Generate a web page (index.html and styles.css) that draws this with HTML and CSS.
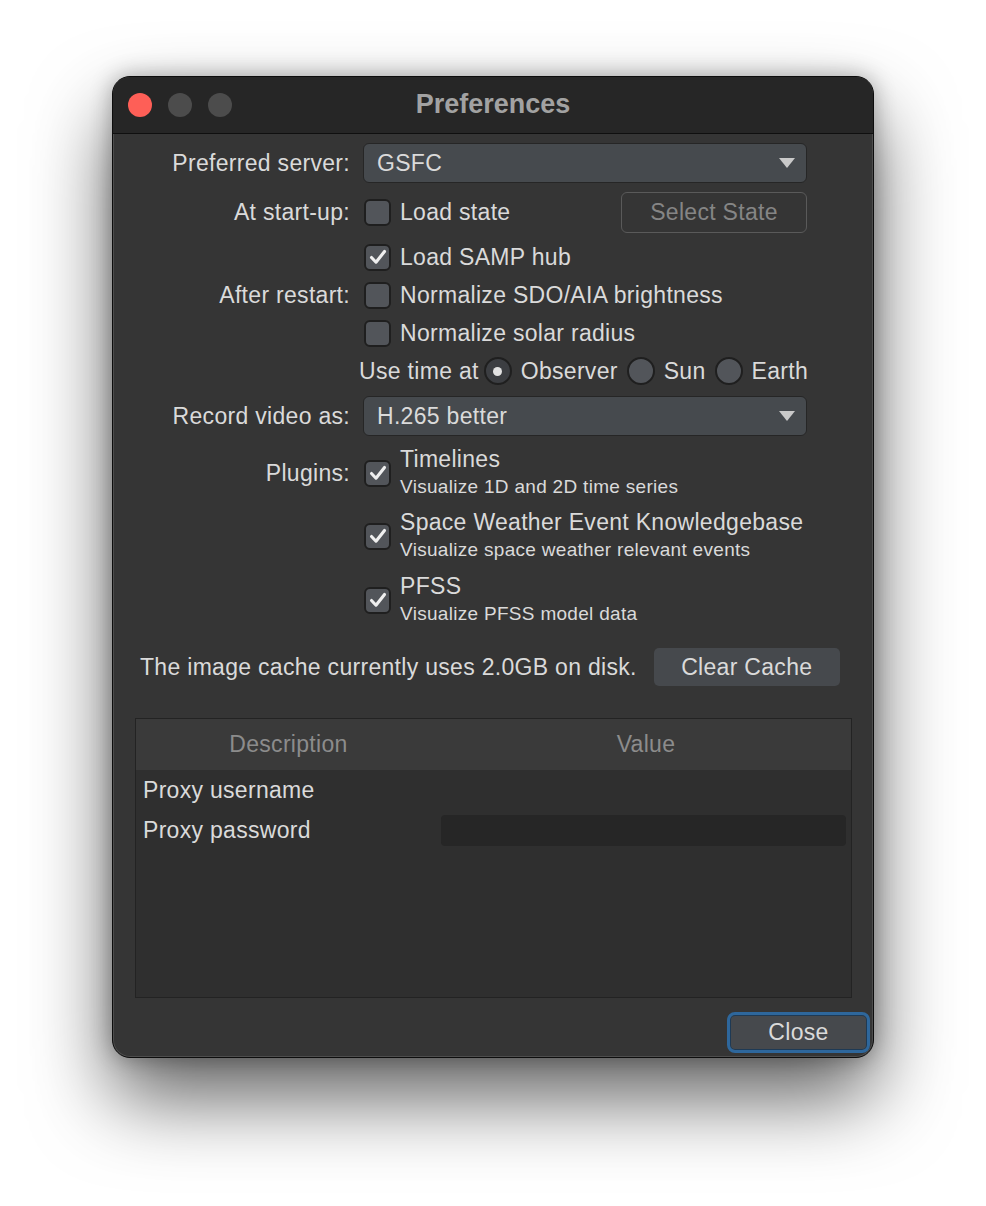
FILE: index.html
```html
<!DOCTYPE html>
<html>
<head>
<meta charset="utf-8">
<link rel="stylesheet" href="styles.css">
</head>
<body>
<div class="window">
  <div class="titlebar">
    <div class="lights">
      <span class="light red"></span>
      <span class="light"></span>
      <span class="light"></span>
    </div>
    <div class="title">Preferences</div>
  </div>
  <div class="content">
    <div class="row r-server">
      <div class="label">Preferred server:</div>
      <div class="combo"><span>GSFC</span><svg class="arrow" width="16" height="10" viewBox="0 0 16 10"><path d="M0 0H16L8 10Z" fill="#c9c9c9"/></svg></div>
    </div>
    <div class="row r-startup">
      <div class="label">At start-up:</div>
      <div class="field">
        <span class="cb"></span><span class="cbtext">Load state</span>
        <button class="btn-ghost">Select State</button>
      </div>
    </div>
    <div class="row r-line">
      <div class="label"></div>
      <div class="field"><span class="cb on"><svg width="18" height="16" viewBox="0 0 18 16"><path d="M2.5 8.5L7 13.2L15.5 2.5" fill="none" stroke="#efefef" stroke-width="3.1" stroke-linecap="round" stroke-linejoin="round"/></svg></span><span class="cbtext">Load SAMP hub</span></div>
    </div>
    <div class="row r-line">
      <div class="label">After restart:</div>
      <div class="field"><span class="cb"></span><span class="cbtext">Normalize SDO/AIA brightness</span></div>
    </div>
    <div class="row r-line">
      <div class="label"></div>
      <div class="field"><span class="cb"></span><span class="cbtext">Normalize solar radius</span></div>
    </div>
    <div class="timerow">
      <span class="ttext">Use time at</span>
      <span class="radio sel"><span class="dot"></span></span><span class="rtext">Observer</span>
      <span class="radio"></span><span class="rtext">Sun</span>
      <span class="radio"></span><span class="rtext">Earth</span>
    </div>
    <div class="row r-video">
      <div class="label">Record video as:</div>
      <div class="combo"><span>H.265 better</span><svg class="arrow" width="16" height="10" viewBox="0 0 16 10"><path d="M0 0H16L8 10Z" fill="#c9c9c9"/></svg></div>
    </div>
    <div class="row r-plugin first">
      <div class="label">Plugins:</div>
      <div class="field"><span class="cb on"><svg width="18" height="16" viewBox="0 0 18 16"><path d="M2.5 8.5L7 13.2L15.5 2.5" fill="none" stroke="#efefef" stroke-width="3.1" stroke-linecap="round" stroke-linejoin="round"/></svg></span>
        <div class="plug"><div class="ptitle">Timelines</div><div class="psub">Visualize 1D and 2D time series</div></div>
      </div>
    </div>
    <div class="row r-plugin">
      <div class="label"></div>
      <div class="field"><span class="cb on"><svg width="18" height="16" viewBox="0 0 18 16"><path d="M2.5 8.5L7 13.2L15.5 2.5" fill="none" stroke="#efefef" stroke-width="3.1" stroke-linecap="round" stroke-linejoin="round"/></svg></span>
        <div class="plug"><div class="ptitle">Space Weather Event Knowledgebase</div><div class="psub">Visualize space weather relevant events</div></div>
      </div>
    </div>
    <div class="row r-plugin">
      <div class="label"></div>
      <div class="field"><span class="cb on"><svg width="18" height="16" viewBox="0 0 18 16"><path d="M2.5 8.5L7 13.2L15.5 2.5" fill="none" stroke="#efefef" stroke-width="3.1" stroke-linecap="round" stroke-linejoin="round"/></svg></span>
        <div class="plug"><div class="ptitle">PFSS</div><div class="psub">Visualize PFSS model data</div></div>
      </div>
    </div>
    <div class="cacherow">
      <span class="cachetext">The image cache currently uses 2.0GB on disk.</span>
      <button class="btn">Clear Cache</button>
    </div>
    <div class="table">
      <div class="thead"><div class="th c1">Description</div><div class="th c2">Value</div></div>
      <div class="tr"><div class="td c1">Proxy username</div><div class="td c2"></div></div>
      <div class="tr"><div class="td c1">Proxy password</div><div class="td c2"><div class="pwd"></div></div></div>
    </div>
    <div class="footer">
      <button class="btn close">Close</button>
    </div>
  </div>
</div>
</body>
</html>
```
FILE: styles.css
```css
html, body {
  margin: 0;
  padding: 0;
  background: #ffffff;
}
body {
  font-family: "Liberation Sans", Arial, sans-serif;
  color: #dadada;
  width: 986px;
  height: 1206px;
  overflow: hidden;
}
.window {
  margin: 76px 0 0 112px;
  width: 762px;
  height: 982px;
  box-sizing: border-box;
  background: #353535;
  border: 1px solid #0d0d0d;
  border-radius: 18px;
  overflow: hidden;
  box-shadow: 0 40px 80px rgba(0,0,0,0.62), 0 0 22px rgba(0,0,0,0.3), inset 0 0 0 1px rgba(255,255,255,0.12);
  display: flex;
  flex-direction: column;
}
.titlebar {
  height: 56px;
  flex: none;
  background: #262626;
  border-bottom: 1px solid #0f0f0f;
  display: flex;
  align-items: center;
  position: relative;
}
.lights {
  display: flex;
  gap: 16px;
  padding-left: 15px;
}
.light {
  width: 24px;
  height: 24px;
  border-radius: 50%;
  background: #4c4c4c;
}
.light.red { background: #fe5f57; }
.title {
  position: absolute;
  left: 0; right: 0; top: 0; bottom: 0;
  display: flex;
  align-items: center;
  justify-content: center;
  font-weight: bold;
  font-size: 27px;
  color: #a2a2a2;
  padding-bottom: 2px;
}
.content {
  flex: 1;
  display: flex;
  flex-direction: column;
  padding-top: 9px;
  font-size: 23px;
  letter-spacing: 0.3px;
}
.row {
  display: grid;
  grid-template-columns: 237px 444px;
  column-gap: 13px;
  align-items: center;
}
.label {
  text-align: right;
  white-space: nowrap;
}
.combo {
  height: 40px;
  box-sizing: border-box;
  background: #464a4e;
  border: 1px solid #262626;
  border-radius: 6px;
  display: flex;
  align-items: center;
  justify-content: space-between;
  padding: 0 11px 0 13px;
}
.field {
  display: flex;
  align-items: center;
  height: 100%;
}
.r-startup { height: 41px; margin-top: 9px; }
.r-line { height: 38px; }
.r-startup + .r-line { margin-top: 5px; }
.cb {
  width: 27px;
  height: 27px;
  box-sizing: border-box;
  margin-left: 1px;
  border-radius: 6px;
  background: #52555a;
  border: 2px solid #1f1f1f;
  display: flex;
  align-items: center;
  justify-content: center;
  flex: none;
}
.cbtext {
  margin-left: 9px;
  white-space: nowrap;
}
.btn-ghost {
  margin-left: auto;
  width: 186px;
  height: 41px;
  background: transparent;
  border: 1.5px solid #5a5a5a;
  border-radius: 6px;
  color: #858585;
  font-family: inherit;
  font-size: 23px;
  letter-spacing: 0.3px;
  padding: 0;
}
.timerow {
  height: 38px;
  width: 807px;
  box-sizing: border-box;
  margin-left: -112px;
  display: flex;
  align-items: center;
  justify-content: flex-end;
  white-space: nowrap;
}
.ttext { margin-right: 5px; }
.radio {
  width: 28px;
  height: 28px;
  box-sizing: border-box;
  border-radius: 50%;
  background: #52555a;
  border: 2px solid #1f1f1f;
  display: flex;
  align-items: center;
  justify-content: center;
  flex: none;
}
.radio.sel { background: #3c3e42; }
.dot {
  width: 9px;
  height: 9px;
  border-radius: 50%;
  background: #e2e2e2;
}
.rtext { margin-left: 9px; margin-right: 9px; }
.rtext:last-child { margin-right: 0; }
.r-video { margin-top: 6px; }
.r-video .combo { height: 40px; }
.r-plugin { height: 54px; margin-top: 9px; }
.r-plugin.first { margin-top: 10px; }
.r-plugin + .r-plugin + .r-plugin { margin-top: 10px; }
.plug {
  margin-left: 9px;
  display: flex;
  flex-direction: column;
  white-space: nowrap;
}
.ptitle { line-height: 27px; font-size: 23px; }
.psub { line-height: 27px; font-size: 19px; }
.cacherow {
  display: flex;
  align-items: center;
  margin-top: 21px;
  padding-left: 27px;
  height: 38px;
}
.btn {
  background: #46494d;
  border: none;
  border-radius: 5px;
  color: #dadada;
  font-family: inherit;
  font-size: 23px;
  letter-spacing: 0.3px;
  padding: 0;
}
.cacherow .btn {
  margin-left: 17px;
  width: 186px;
  height: 38px;
}
.table {
  margin: 32px 0 0 22px;
  width: 717px;
  height: 280px;
  box-sizing: border-box;
  background: #2f2f2f;
  border: 1.5px solid #232323;
  display: flex;
  flex-direction: column;
}
.thead {
  display: flex;
  height: 51px;
  background: #3a3a3a;
  color: #8c8c8c;
  align-items: center;
}
.c1 { width: 305px; flex: none; }
.c2 { flex: 1; }
.th { text-align: center; }
.tr {
  display: flex;
  height: 40px;
  align-items: center;
}
.td.c1 { padding-left: 7px; box-sizing: border-box; }
.td.c2 { padding-right: 5px; }
.pwd {
  height: 31px;
  background: #262626;
  border-radius: 4px;
}
.footer {
  display: flex;
  justify-content: flex-end;
  padding: 14px 3px 0 0;
}
.close {
  width: 143px;
  height: 41px;
  box-sizing: border-box;
  border: 3px solid #2e679c;
  border-radius: 8px;
  box-shadow: inset 0 0 0 1px #1e3a55;
}
```
